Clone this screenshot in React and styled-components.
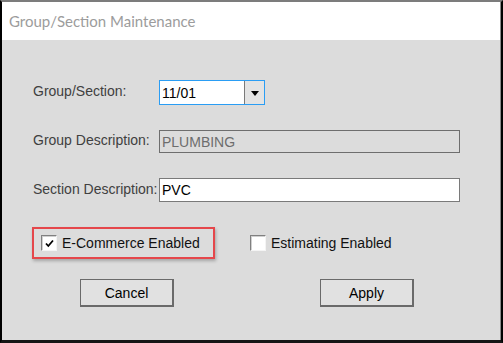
import styled, { createGlobalStyle } from "styled-components";

const GlobalStyle = createGlobalStyle`
  html, body {
    margin: 0;
    padding: 0;
    width: 100%;
    height: 100%;
    overflow: hidden;
  }

  body {
    font-family: "Liberation Sans", Arial, sans-serif;
  }

  #root {
    height: 100%;
  }
`;

const Window = styled.div`
  box-sizing: border-box;
  width: 503px;
  height: 343px;
  display: flex;
  flex-direction: column;
  background: #dcdcdc;
  border-top: 2px solid #7c7c7c;
  border-left: 2px solid #000;
  border-right: 2px solid #000;
  border-bottom: 3px solid #151515;
  box-shadow: inset -1px 0 0 #8a8a8a;
`;

const TitleBar = styled.div`
  height: 38px;
  display: flex;
  align-items: center;
  padding-left: 7px;
  background: #fff;
  margin-right: 1px;
  font-family: Lato, "Open Sans", sans-serif;
  font-size: 15px;
  color: #9c9c9c;
`;

const Body = styled.div`
  flex: 1;
  padding: 40px 0 0 31px;
  font-size: 14px;
`;

const FieldGrid = styled.div`
  display: grid;
  grid-template-columns: 126px auto;
  grid-template-rows: 25px 23px 24px;
  row-gap: 25px;
  align-items: center;
`;

const Label = styled.div`
  color: #404040;
  margin-top: -3px;
  white-space: nowrap;
`;

const Combo = styled.div`
  box-sizing: border-box;
  width: 106px;
  height: 25px;
  display: flex;
  border: 1px solid #2a9df4;
  background: #fff;
`;

const ComboText = styled.div`
  flex: 1;
  display: flex;
  align-items: center;
  padding-left: 2px;
  color: #000;
`;

const ComboButton = styled.div`
  width: 19px;
  display: flex;
  align-items: center;
  justify-content: center;
  border-left: 1px solid #7a7a7a;
  background: #e3e3e3;

  &::after {
    content: "";
    border-left: 4px solid transparent;
    border-right: 4px solid transparent;
    border-top: 5px solid #000;
    margin-top: 1px;
  }
`;

const TextBox = styled.div`
  box-sizing: border-box;
  width: 301px;
  height: ${(p) => p.$h}px;
  display: flex;
  align-items: center;
  padding-left: 2px;
  border: 1px solid ${(p) => (p.$disabled ? "#6e6e6e" : "#7a7a7a")};
  background: ${(p) => (p.$disabled ? "#dcdcdc" : "#fff")};
  color: ${(p) => (p.$disabled ? "#6d6d6d" : "#000")};
`;

const OptionsRow = styled.div`
  display: flex;
  align-items: center;
  margin-top: 25px;
  margin-left: -1px;
`;

const Highlight = styled.div`
  box-sizing: border-box;
  width: 183px;
  height: 32px;
  display: flex;
  align-items: center;
  padding-left: 7px;
  border: 2px solid #e5474b;
  box-shadow: 1px 2px 3px rgba(0, 0, 0, 0.25);
`;

const CheckItem = styled.label`
  display: flex;
  align-items: center;
  gap: 5px;
  color: #111;
  margin-left: ${(p) => p.$offset || 0}px;
`;

const Box = styled.span`
  box-sizing: border-box;
  width: 16px;
  height: 16px;
  display: flex;
  align-items: center;
  justify-content: center;
  background: #fff;
  border: 1px solid;
  border-color: #808080 #f4f4f4 #f4f4f4 #808080;
  box-shadow: inset 1px 1px 0 #d0d0d0;
`;

const ButtonRow = styled.div`
  display: flex;
  margin-top: 20px;
  margin-left: 47px;
  gap: 146px;
`;

const Button = styled.button`
  box-sizing: border-box;
  width: 94px;
  height: 28px;
  padding: 0;
  background: #e1e1e1;
  border: 1px solid #6a6a6a;
  border-right-width: 2px;
  border-bottom-width: 2px;
  font-family: "Liberation Sans", Arial, sans-serif;
  font-size: 14px;
  color: #000;
`;

function Check({ checked }) {
  return (
    <Box>
      {checked && (
        <svg width="9" height="9" viewBox="0 0 9 9">
          <path d="M1 4.5 L3.3 7 L8 1.5" fill="none" stroke="#000" strokeWidth="1.8" />
        </svg>
      )}
    </Box>
  );
}

export default function App() {
  return (
    <>
      <GlobalStyle />
      <Window>
        <TitleBar>Group/Section Maintenance</TitleBar>
        <Body>
          <FieldGrid>
            <Label>Group/Section:</Label>
            <Combo>
              <ComboText>11/01</ComboText>
              <ComboButton />
            </Combo>

            <Label>Group Description:</Label>
            <TextBox $h={23} $disabled>
              PLUMBING
            </TextBox>

            <Label>Section Description:</Label>
            <TextBox $h={24}>PVC</TextBox>
          </FieldGrid>

          <OptionsRow>
            <Highlight>
              <CheckItem>
                <Check checked />
                E-Commerce Enabled
              </CheckItem>
            </Highlight>
            <CheckItem $offset={35}>
              <Check />
              Estimating Enabled
            </CheckItem>
          </OptionsRow>

          <ButtonRow>
            <Button>Cancel</Button>
            <Button>Apply</Button>
          </ButtonRow>
        </Body>
      </Window>
    </>
  );
}
